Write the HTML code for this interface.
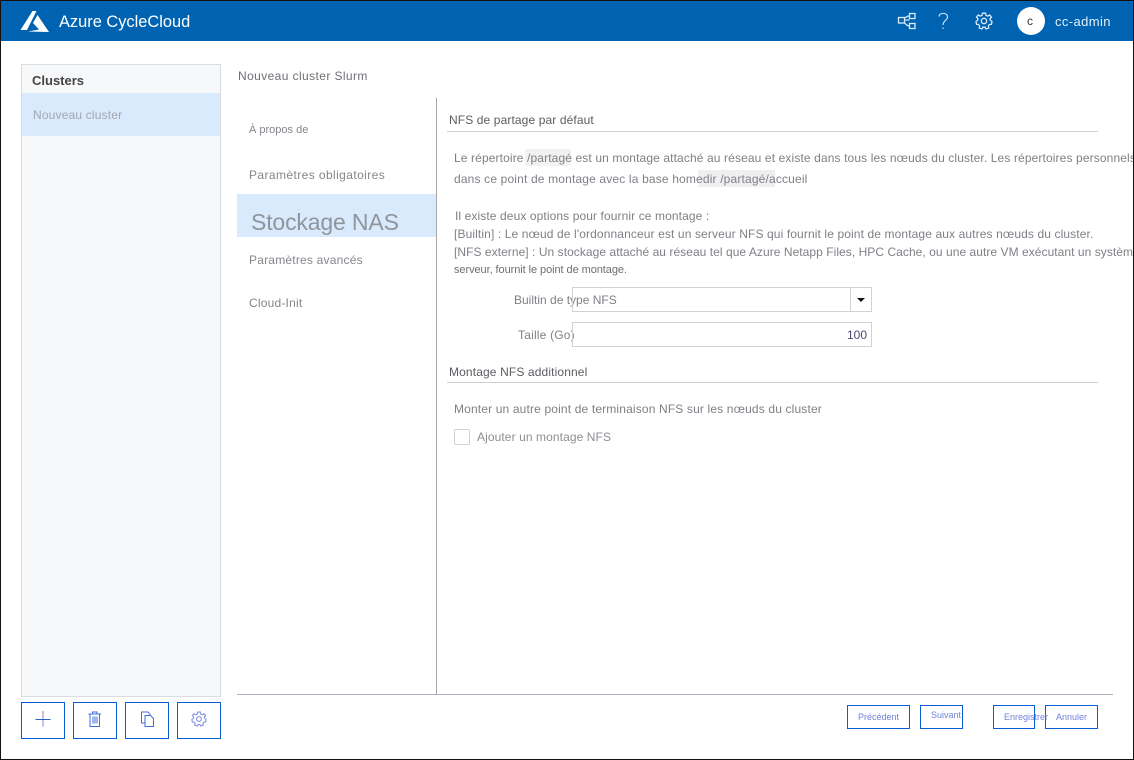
<!DOCTYPE html>
<html lang="fr"><head><meta charset="utf-8"><title>Azure CycleCloud</title>
<style>
html,body{margin:0;padding:0;background:#fff}
#p{position:relative;width:1134px;height:760px;overflow:hidden;background:#fff;font-family:"Liberation Sans",sans-serif;font-size:12px;color:#7f7f86}
#p div,#p span.a,#p svg{position:absolute}
.t{white-space:nowrap;line-height:14px}
.btn{box-sizing:border-box;border:1px solid #0a5fd8;background:#fff}
.ib{box-sizing:border-box;border:1px solid #0a5fd8;top:702px;width:44px;height:37px;background:#fff}
.lbl{color:#7082dc;font-size:9px;white-space:nowrap;line-height:12px}
</style></head><body>
<div id="p">
<div style="left:1px;top:1px;width:1132px;height:40px;background:#0063b1"></div>
<svg style="left:20px;top:10px" width="30" height="23" viewBox="0 0 30 23"><path fill="#fff" d="M12.500 1 L16.500 1 L7 20 L0.500 20 Z M17.500 5 L29 22 L8 21.500 L19 19.500 L13 13 Z"/></svg>
<div class="t" style="left:59px;top:12px;color:#fff;font-size:16.400px;line-height:20px">Azure CycleCloud</div>
<svg style="left:897px;top:12px" width="20" height="18" viewBox="0 0 20 18" fill="none" stroke="#dbe9f6" stroke-width="1.300"><rect x="1.500" y="5.500" width="6" height="5.500"/><rect x="12.500" y="1.500" width="5.500" height="5"/><rect x="12.500" y="11.500" width="5.500" height="5"/><path d="M7.500 8H12.500M12.500 4C9.500 4 9.500 5 7.500 6M12.500 14C9.500 14 9.500 12.500 7.500 11"/></svg>
<svg style="left:937px;top:12px" width="12" height="19" viewBox="0 0 12 19" fill="none" stroke="#dbe9f6" stroke-width="1.100"><path d="M2 4.500C2 0.500 10.500 0 10.500 5C10.500 8.500 6 8.500 6 13"/><path d="M6 15.500V17"/></svg>
<svg style="left:975px;top:12px" width="18" height="18" viewBox="0 0 18 18" fill="none" stroke="#dbe9f6" stroke-width="1.300"><circle cx="9" cy="9" r="2.700"/><path d="M7.500 1.200H10.500L11 3.300L12.800 4.100L14.700 3L16.500 5.200L15 6.800L15.500 8.500L17 9.500L16.500 12.300L14.500 12.500L13.300 14L13.800 16L11 17L10 15.200H8L7 17L4.200 16L4.700 14L3.500 12.500L1.500 12.300L1 9.500L2.500 8.500L3 6.800L1.500 5.200L3.300 3L5.200 4.100L7 3.300Z"/></svg>
<div style="left:1017px;top:7px;width:28px;height:28px;border-radius:50%;background:#fff"></div>
<div class="t" style="left:1017px;top:14px;width:26px;text-align:center;color:#333;font-size:12px">c</div>
<div class="t" style="left:1055px;top:15px;color:#e6f0f9;font-size:13px;letter-spacing:.4px">cc-admin</div>

<div style="left:21px;top:64px;width:198px;height:631px;border:1px solid #d8dde2;background:#f7f8fa"></div>
<div style="left:22px;top:93px;width:198px;height:43px;background:#d8eafc"></div>
<div class="t" style="left:32px;top:74px;font-weight:700;font-size:13px;color:#444">Clusters</div>
<div class="t" style="left:33px;top:108px;color:#a3a8ae;letter-spacing:.17px">Nouveau cluster</div>

<div class="ib" style="left:21px"></div><div class="ib" style="left:73px"></div><div class="ib" style="left:125px"></div><div class="ib" style="left:177px"></div>
<svg style="left:35px;top:711px" width="16" height="16" viewBox="0 0 16 16"><path d="M8 0V15.500" stroke="#a074d0" stroke-width="1"/><path d="M0.500 8.500H15.500" stroke="#2a5fc8" stroke-width="1"/></svg>
<svg style="left:87px;top:711px" width="16" height="16" viewBox="0 0 16 16" fill="none" stroke="#3f6fdc" stroke-width="1"><path d="M1.500 3H14M5.500 3V1H10V3M3 3V15.500H12.500V3M6 5.500V12.500M8 5.500V12.500M10 5.500V12.500"/></svg>
<svg style="left:140px;top:711px" width="15" height="16" viewBox="0 0 15 16" fill="none" stroke="#3f6fdc" stroke-width="1"><path d="M5 12H1.500V1H8L10 3.500V4.500"/><path d="M5 4.500H10.500L13.500 7.500V15.500H5Z"/></svg>
<svg style="left:191px;top:711px" width="16" height="16" viewBox="0 0 18 18" fill="none" stroke="#7d8fe6" stroke-width="1.200"><circle cx="9" cy="9" r="2.700"/><path d="M7.500 1.200H10.500L11 3.300L12.800 4.100L14.700 3L16.500 5.200L15 6.800L15.500 8.500L17 9.500L16.500 12.300L14.500 12.500L13.300 14L13.800 16L11 17L10 15.200H8L7 17L4.200 16L4.700 14L3.500 12.500L1.500 12.300L1 9.500L2.500 8.500L3 6.800L1.500 5.200L3.300 3L5.200 4.100L7 3.300Z"/></svg>

<div class="t" style="left:238px;top:69px;color:#6f6f76;letter-spacing:.4px">Nouveau cluster Slurm</div>
<div class="t" style="left:249px;top:123px;font-size:11px;color:#85858c">À propos de</div>
<div class="t" style="left:249px;top:168px;letter-spacing:.41px;color:#85858c">Paramètres obligatoires</div>
<div style="left:237px;top:194px;width:199px;height:43px;background:#d8eafc"></div>
<div class="t" style="left:251px;top:209px;font-size:23px;line-height:26px;color:#90959c;letter-spacing:-.15px">Stockage NAS</div>
<div class="t" style="left:249px;top:253px;letter-spacing:.21px;color:#85858c">Paramètres avancés</div>
<div class="t" style="left:249px;top:296px;color:#85858c;letter-spacing:.2px">Cloud-Init</div>
<div style="left:436px;top:98px;width:1px;height:597px;background:#a9a9a9"></div>

<div class="t" style="left:449px;top:113px;color:#5c5c62;letter-spacing:.11px">NFS de partage par défaut</div>
<div style="left:447px;top:131px;width:651px;height:1px;background:#cfcfcf"></div>
<div style="left:525px;top:149px;width:46px;height:17px;background:#f2f2f2"></div>
<div style="left:698px;top:170px;width:77px;height:17px;background:#efefef"></div>
<div class="t" style="left:454px;top:151px;letter-spacing:.12px">Le répertoire /partagé est un montage attaché au réseau et existe dans tous les nœuds du cluster. Les répertoires personnels</div>
<div class="t" style="left:454px;top:172px;letter-spacing:.16px">dans ce point de montage avec la base homedir /partagé/accueil</div>
<div class="t" style="left:455px;top:209px;letter-spacing:.1px">Il existe deux options pour fournir ce montage :</div>
<div class="t" style="left:454px;top:227px;letter-spacing:.115px">[Builtin] : Le nœud de l'ordonnanceur est un serveur NFS qui fournit le point de montage aux autres nœuds du cluster.</div>
<div class="t" style="left:454px;top:245px;letter-spacing:.05px">[NFS externe] : Un stockage attaché au réseau tel que Azure Netapp Files, HPC Cache, ou une autre VM exécutant un système</div>
<div class="t" style="left:454px;top:263px;font-size:11px;letter-spacing:-.07px;color:#6e6e74">serveur, fournit le point de montage.</div>

<div class="t" style="left:514px;top:293px;letter-spacing:0">Builtin de type NFS</div>
<div style="left:572px;top:287px;width:298px;height:23px;border:1px solid #d2d2d2"></div>
<div style="left:850px;top:288px;width:1px;height:23px;background:#d2d2d2"></div>
<div style="left:857px;top:298px;width:0;height:0;border-left:4px solid transparent;border-right:4px solid transparent;border-top:4px solid #111"></div>
<div class="t" style="left:518px;top:328px;letter-spacing:.2px">Taille (Go)</div>
<div style="left:572px;top:322px;width:298px;height:23px;border:1px solid #d2d2d2"></div>
<div class="t" style="left:847px;top:328px;color:#4a4a70">100</div>

<div class="t" style="left:449px;top:365px;color:#5c5c62;letter-spacing:.13px">Montage NFS additionnel</div>
<div style="left:447px;top:382px;width:651px;height:1px;background:#cfcfcf"></div>
<div class="t" style="left:454px;top:402px;letter-spacing:.15px">Monter un autre point de terminaison NFS sur les nœuds du cluster</div>
<div style="left:454px;top:429px;width:14px;height:14px;border:1px solid #d2d2d2;border-radius:2px"></div>
<div class="t" style="left:477px;top:430px;color:#8e8e94;letter-spacing:.09px">Ajouter un montage NFS</div>

<div style="left:237px;top:694px;width:876px;height:1px;background:#b0adc0"></div>
<div class="btn" style="left:847px;top:705px;width:63px;height:24px"></div>
<div class="btn" style="left:920px;top:705px;width:43px;height:24px"></div>
<div class="btn" style="left:993px;top:705px;width:42px;height:24px"></div>
<div class="btn" style="left:1045px;top:705px;width:53px;height:24px"></div>
<div class="lbl" style="left:858px;top:711px">Précédent</div>
<div class="lbl" style="left:931px;top:709px">Suivant</div>
<div class="lbl" style="left:1004px;top:711px">Enregistrer</div>
<div class="lbl" style="left:1056px;top:711px">Annuler</div>

<div style="left:0;top:0;width:1134px;height:1px;background:#111"></div>
<div style="left:0;top:0;width:1px;height:760px;background:#111"></div>
<div style="left:1133px;top:0;width:1px;height:760px;background:#111"></div>
<div style="left:0;top:759px;width:1134px;height:1px;background:#111"></div>
</div>
</body></html>
